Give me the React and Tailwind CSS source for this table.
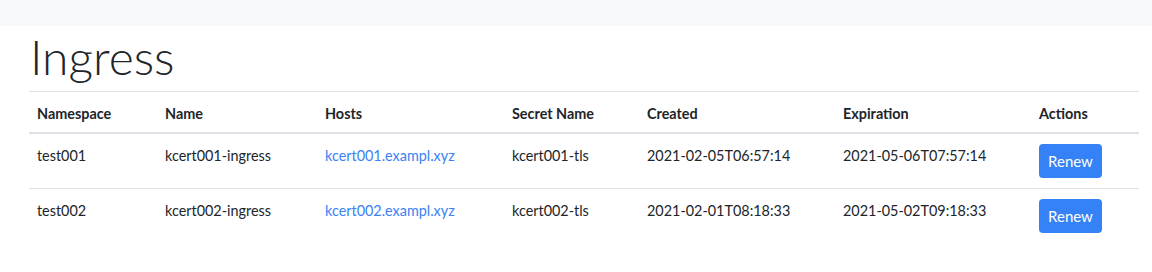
import React from 'react';

const rows = [
  {
    namespace: 'test001',
    name: 'kcert001-ingress',
    host: 'kcert001.exampl.xyz',
    secret: 'kcert001-tls',
    created: '2021-02-05T06:57:14',
    expiration: '2021-05-06T07:57:14',
  },
  {
    namespace: 'test002',
    name: 'kcert002-ingress',
    host: 'kcert002.exampl.xyz',
    secret: 'kcert002-tls',
    created: '2021-02-01T08:18:33',
    expiration: '2021-05-02T09:18:33',
  },
];

const cols = ['Namespace', 'Name', 'Hosts', 'Secret Name', 'Created', 'Expiration', 'Actions'];
const widths = ['w-[128px]', 'w-[160px]', 'w-[187px]', 'w-[135px]', 'w-[196px]', 'w-[196px]', 'w-[108px]'];

const App = () => {
  return (
    <div className="min-h-screen bg-white text-[#212529] font-['Lato','Noto_Sans',sans-serif] text-[14.4px] leading-6">
      <div className="h-[26px] bg-[#f8f9fa]" />

      <main className="ml-[29px] w-[1110px]">
        <h1 className="text-[48px] font-light leading-[61px] mb-[4px] ml-[1px]">Ingress</h1>

        <table className="w-full table-fixed border-collapse">
          <thead>
            <tr className="border-t border-[#dee2e6] border-b-2">
              {cols.map((c, i) => (
                <th key={c} className={`${widths[i]} px-2 pt-[10px] pb-[6px] text-left font-bold`}>
                  {c}
                </th>
              ))}
            </tr>
          </thead>
          <tbody>
            {rows.map((r, idx) => (
              <tr key={r.namespace} className={idx === 0 ? 'border-b border-[#dee2e6]' : ''}>
                <td className="px-2 pt-[10px] align-top">{r.namespace}</td>
                <td className="px-2 pt-[10px] align-top">{r.name}</td>
                <td className="px-2 pt-[10px] align-top">
                  <a href="#" className="text-[#3b82f6]">{r.host}</a>
                </td>
                <td className="px-2 pt-[10px] align-top">{r.secret}</td>
                <td className="px-2 pt-[10px] align-top">{r.created}</td>
                <td className="px-2 pt-[10px] align-top">{r.expiration}</td>
                <td className="px-2 pt-[10px] pb-[10px] align-top">
                  <button className="w-[63px] h-[34px] rounded-[4px] bg-[#3482f6] text-white text-[15px]">
                    Renew
                  </button>
                </td>
              </tr>
            ))}
          </tbody>
        </table>
      </main>
    </div>
  );
};

export default App;
